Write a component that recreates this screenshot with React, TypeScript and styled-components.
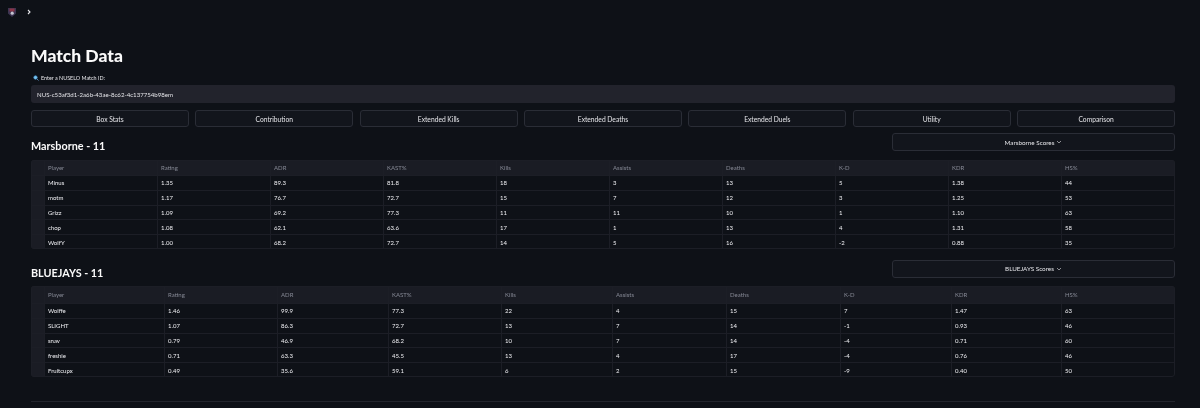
import React from "react";
import styled, { createGlobalStyle } from "styled-components";

const GlobalStyle = createGlobalStyle`
  html, body {
    margin: 0;
    background: #0e1117;
    color: #fafafa;
    font-family: Lato, "Noto Sans", sans-serif;
    overflow: hidden;
  }
`;

const Page = styled.div`
  filter: blur(0.3px);
`;

const TopBar = styled.header`
  display: flex;
  align-items: center;
  height: 24px;
  padding-left: 8px;
  gap: 10px;
`;

const Main = styled.main`
  width: 1144px;
  padding: 20px 0 0 31px;
`;

const Title = styled.h1`
  margin: 0;
  font-size: 17.5px;
  line-height: 24px;
  font-weight: 900;
  color: #fafafa;
`;

const Label = styled.label`
  display: flex;
  align-items: center;
  gap: 2px;
  margin-top: 6px;
  height: 8px;
  padding-left: 2px;
  font-size: 5.4px;
  color: #e6e6ea;
`;

const Input = styled.input`
  display: block;
  box-sizing: border-box;
  width: 100%;
  height: 18px;
  margin-top: 3px;
  padding: 0 6px;
  border: 0;
  border-radius: 3px;
  outline: 0;
  background: #22232c;
  color: #e4e4e8;
  font-family: inherit;
  font-size: 6.1px;
`;

const ButtonRow = styled.div`
  display: grid;
  grid-template-columns: repeat(7, 1fr);
  gap: 6.5px;
  margin-top: 7px;
`;

const Button = styled.button`
  box-sizing: border-box;
  height: 17px;
  padding: 0;
  border: 1px solid #2a2d36;
  border-radius: 3px;
  background: #12151c;
  color: #e4e4e8;
  font-family: inherit;
  font-size: 6.7px;
`;

const Section = styled.section<{ $top: number }>`
  margin-top: ${(p) => p.$top}px;
`;

const SectionHead = styled.div`
  display: flex;
  justify-content: space-between;
  align-items: flex-start;
  height: 26.5px;
`;

const Heading = styled.h2`
  margin: 5px 0 0;
  font-size: 10.8px;
  line-height: 16px;
  font-weight: 700;
  color: #fafafa;
`;

const Popover = styled(Button)`
  display: flex;
  align-items: center;
  justify-content: center;
  gap: 2px;
  width: 283px;
  height: 18px;
  font-size: 6.3px;
`;

const Table = styled.div`
  outline: 1px solid #1c1e26;
  outline-offset: -1px;
  border-radius: 3px;
  overflow: hidden;
`;

const Row = styled.div<{ $columns: string; $height: number; $header?: boolean }>`
  display: grid;
  grid-template-columns: ${(p) => p.$columns};
  height: ${(p) => p.$height}px;
  background: ${(p) => (p.$header ? "#1a1c24" : "#0e1117")};
  color: ${(p) => (p.$header ? "#868995" : "#f0f0f4")};
  font-size: 6px;
  & + & {
    border-top: 1px solid #1c1e26;
    box-sizing: border-box;
  }
`;

const IndexCell = styled.div`
  background: #1a1c24;
  border-right: 1px solid #1c1e26;
`;

const Cell = styled.div`
  display: flex;
  align-items: center;
  padding-left: 3px;
  border-right: 1px solid #1c1e26;
  &:last-child {
    border-right: 0;
  }
`;

const Divider = styled.hr`
  margin: 24px 0 0;
  border: 0;
  border-top: 1px solid #23252d;
`;

const headers = ["Player", "Rating", "ADR", "KAST%", "Kills", "Assists", "Deaths", "K-D", "KDR", "HS%"];

const marsborne = [
  ["Minus", "1.35", "89.3", "81.8", "18", "3", "13", "5", "1.38", "44"],
  ["motm", "1.17", "76.7", "72.7", "15", "7", "12", "3", "1.25", "53"],
  ["Grizz", "1.09", "69.2", "77.3", "11", "11", "10", "1", "1.10", "63"],
  ["chop", "1.08", "62.1", "63.6", "17", "1", "13", "4", "1.31", "58"],
  ["WolfY", "1.00", "68.2", "72.7", "14", "5", "16", "-2", "0.88", "35"],
];

const bluejays = [
  ["Wolffe", "1.46", "99.9", "77.3", "22", "4", "15", "7", "1.47", "63"],
  ["SLIGHT", "1.07", "86.3", "72.7", "13", "7", "14", "-1", "0.93", "46"],
  ["snav", "0.79", "46.9", "68.2", "10", "7", "14", "-4", "0.71", "60"],
  ["freshie", "0.71", "63.3", "45.5", "13", "4", "17", "-4", "0.76", "46"],
  ["Fruitcupx", "0.49", "35.6", "59.1", "6", "2", "15", "-9", "0.40", "50"],
];

const marsColumns = "14px repeat(10, 1fr)";
const blueColumns = "14px 120px 113px 111px 113px 111px 114px 114px 111px 110px 1fr";

const Logo = () => (
  <svg width="8" height="9" viewBox="0 0 8 9">
    <path d="M0 0H8V5.5L4 9L0 5.5Z" fill="#3d3552" />
    <path d="M1.5 0.5H6.5V3.5H1.5Z" fill="#8a3346" />
    <circle cx="4.2" cy="5.2" r="1.6" fill="#c4c4d0" />
  </svg>
);

const Chevron = () => (
  <svg width="6" height="6" viewBox="0 0 6 6" fill="none" stroke="#e6e6ea" strokeWidth="1.1">
    <path d="M2 1L4 3L2 5" />
  </svg>
);

const SearchIcon = () => (
  <svg width="6" height="6" viewBox="0 0 6 6" fill="none">
    <circle cx="2.5" cy="2.5" r="1.7" fill="#7cc4ee" stroke="#4b9fdc" strokeWidth="0.7" />
    <path d="M3.8 3.8L5.5 5.5" stroke="#5d8fc0" strokeWidth="0.9" />
  </svg>
);

const SmallDown = () => (
  <svg width="6" height="6" viewBox="0 0 6 6" fill="none" stroke="#e4e4e8" strokeWidth="0.6">
    <path d="M1 2L3 4L5 2" />
  </svg>
);

const StatsTable = ({ rows, columns, headerHeight }: { rows: string[][]; columns: string; headerHeight: number }) => (
  <Table>
    <Row $columns={columns} $height={headerHeight} $header>
      <IndexCell />
      {headers.map((h) => (
        <Cell key={h}>{h}</Cell>
      ))}
    </Row>
    {rows.map((row) => (
      <Row key={row[0]} $columns={columns} $height={14.8}>
        <IndexCell />
        {row.map((value, i) => (
          <Cell key={i}>{value}</Cell>
        ))}
      </Row>
    ))}
  </Table>
);

const tabs = ["Box Stats", "Contribution", "Extended Kills", "Extended Deaths", "Extended Duels", "Utility", "Comparison"];

export default function App() {
  return (
    <Page>
      <GlobalStyle />
      <TopBar>
        <Logo />
        <Chevron />
      </TopBar>
      <Main>
        <Title>Match Data</Title>
        <Label>
          <SearchIcon />
          Enter a NUSELO Match ID:
        </Label>
        <Input readOnly value="NUS-c53af3d1-2a6b-43ae-8c62-4c137754b98em" />
        <ButtonRow>
          {tabs.map((t) => (
            <Button key={t}>{t}</Button>
          ))}
        </ButtonRow>
        <Section $top={6}>
          <SectionHead>
            <Heading>Marsborne - 11</Heading>
            <Popover>
              Marsborne Scores <SmallDown />
            </Popover>
          </SectionHead>
          <StatsTable rows={marsborne} columns={marsColumns} headerHeight={15.5} />
        </Section>
        <Section $top={11}>
          <SectionHead>
            <Heading>BLUEJAYS - 11</Heading>
            <Popover>
              BLUEJAYS Scores <SmallDown />
            </Popover>
          </SectionHead>
          <StatsTable rows={bluejays} columns={blueColumns} headerHeight={16.5} />
        </Section>
        <Divider />
      </Main>
    </Page>
  );
}
